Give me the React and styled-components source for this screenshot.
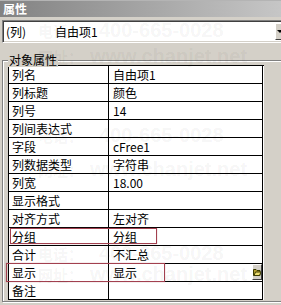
import React from 'react';
import styled, { createGlobalStyle } from 'styled-components';

const GlobalStyle = createGlobalStyle`
  html, body {
    margin: 0;
    padding: 0;
    background: #d4d0c8;
  }
  body {
    font-family: "Noto Sans CJK SC", "Liberation Sans", sans-serif;
    font-size: 12px;
    color: #000;
  }
`;

const Panel = styled.div`
  position: relative;
  width: 281px;
  height: 305px;
  overflow: hidden;
  background: #d4d0c8;
  display: flex;
  flex-direction: column;
`;

const TitleBar = styled.div`
  flex: none;
  height: 17px;
  box-sizing: border-box;
  border-top: 1px solid #b4b4b4;
  background: linear-gradient(to right, #828282, #c6c6c6);
  color: #fff;
  font-weight: bold;
  line-height: 15px;
  padding-left: 3px;
`;

const Combo = styled.div`
  flex: none;
  display: flex;
  align-items: center;
  margin: 3px 0 0 2px;
  width: 292px;
  height: 23px;
  box-sizing: border-box;
  border: 1px solid;
  border-color: #808080 #fff #fff #808080;
  box-shadow: inset 1px 1px 0 #404040, inset -1px -1px 0 #d4d0c8;
  background: #fff;
  padding: 2px 2px 2px 3px;
`;

const ComboKey = styled.span`
  width: 49px;
  flex: none;
`;

const ComboValue = styled.span`
  flex: 1;
`;

const DropButton = styled.div`
  flex: none;
  align-self: stretch;
  width: 16px;
  box-sizing: border-box;
  background: #d4d0c8;
  border: 1px solid;
  border-color: #fff #404040 #404040 #fff;
  display: flex;
  align-items: center;
  padding-left: 1px;
`;

const Arrow = styled.span`
  width: 0;
  height: 0;
  border-left: 3px solid transparent;
  border-right: 3px solid transparent;
  border-top: 3px solid #000;
`;

const GroupBox = styled.div`
  position: relative;
  flex: none;
  margin: 17px 0 0 2px;
  width: 292px;
  box-sizing: border-box;
  border: 1px solid #808080;
  box-shadow: inset 1px 1px 0 #fff, 1px 1px 0 #fff;
  padding: 4px 0 1px 5px;
`;

const Legend = styled.span`
  position: absolute;
  top: -9px;
  left: 5px;
  padding: 0 1px;
  line-height: 15px;
  background: #d4d0c8;
`;

const Grid = styled.div`
  display: grid;
  grid-template-columns: 100px 154px;
  grid-auto-rows: 18px;
  width: 255px;
  border-left: 1px solid #000;
  border-top: 1px solid #000;
  background: #fff;
`;

const Cell = styled.div`
  position: relative;
  box-sizing: border-box;
  border-right: 1px solid #000;
  border-bottom: 1px solid #000;
  padding-left: ${p => (p.$value ? 4 : 3)}px;
  line-height: 17px;
  white-space: nowrap;
  overflow: hidden;
`;

const CellButton = styled.div`
  position: absolute;
  right: 0;
  top: 0;
  width: 10px;
  height: 16px;
  box-sizing: border-box;
  background: #d4d0c8;
  border: 1px solid;
  border-color: #fff #404040 #404040 #fff;
  display: flex;
  align-items: center;
  justify-content: center;
`;

const Highlight = styled.div`
  position: absolute;
  left: ${p => p.$left}px;
  top: ${p => p.$top}px;
  width: ${p => p.$width}px;
  height: ${p => p.$height}px;
  box-sizing: border-box;
  border: 1px solid #a2404f;
  box-shadow: 0 0 1px rgba(162, 64, 79, 0.5);
  pointer-events: none;
`;

const Watermark = styled.div`
  position: absolute;
  inset: 0;
  pointer-events: none;
`;

const WmLine = styled.div`
  position: absolute;
  left: 38px;
  top: ${p => p.$top}px;
  white-space: nowrap;
  color: rgba(0, 0, 0, 0.055);
  font-family: "Liberation Sans", "Noto Sans CJK SC", sans-serif;
  font-weight: bold;
  font-size: 20px;
  line-height: 20px;
`;

const WmKey = styled.span`
  display: inline-block;
  width: ${p => p.$width}px;
  font-family: "Noto Sans CJK SC", sans-serif;
  font-size: 15px;
`;

const FolderIcon = () => (
  <svg width="8" height="7" viewBox="0 0 8 7">
    <path d="M0.5 0.5h2.5l1 1h3v5h-6.5z" fill="#b8a030" stroke="#3c3c00" strokeWidth="1" />
    <path d="M1 6.5l1.5-3.5h5.5l-1.5 3.5z" fill="#f0e070" stroke="#3c3c00" strokeWidth="1" />
  </svg>
);

const rows = [
  ['列名', '自由项1'],
  ['列标题', '颜色'],
  ['列号', '14'],
  ['列间表达式', ''],
  ['字段', 'cFree1'],
  ['列数据类型', '字符串'],
  ['列宽', '18.00'],
  ['显示格式', ''],
  ['对齐方式', '左对齐'],
  ['分组', '分组'],
  ['合计', '不汇总'],
  ['显示', '显示', true],
  ['备注', ''],
];

const watermark = [
  { top: 20, key: '电话：', text: '400-665-0028', w: 61 },
  { top: 46, key: '网址：', text: 'www.chanjet.net', w: 52 },
  { top: 125, key: '电话：', text: '400-665-0028', w: 61 },
  { top: 159, key: '网址：', text: 'www.chanjet.net', w: 52 },
  { top: 243, key: '电话：', text: '400-665-0028', w: 61 },
  { top: 264, key: '网址：', text: 'www.chanjet.net', w: 52 },
];

export default function App() {
  return (
    <>
      <GlobalStyle />
      <Panel>
        <TitleBar>属性</TitleBar>
        <Combo>
          <ComboKey>(列)</ComboKey>
          <ComboValue>自由项1</ComboValue>
          <DropButton>
            <Arrow />
          </DropButton>
        </Combo>
        <GroupBox>
          <Legend>对象属性</Legend>
          <Grid>
            {rows.map(([name, value, hasButton]) => (
              <React.Fragment key={name}>
                <Cell>{name}</Cell>
                <Cell $value>
                  {value}
                  {hasButton && (
                    <CellButton>
                      <FolderIcon />
                    </CellButton>
                  )}
                </Cell>
              </React.Fragment>
            ))}
          </Grid>
        </GroupBox>

        <Highlight $left={10} $top={228} $width={147} $height={16} />
        <Highlight $left={6} $top={263} $width={159} $height={19} />

        <Watermark>
          {watermark.map(line => (
            <WmLine key={line.top} $top={line.top}>
              <WmKey $width={line.w}>{line.key}</WmKey>
              {line.text}
            </WmLine>
          ))}
        </Watermark>
      </Panel>
    </>
  );
}
